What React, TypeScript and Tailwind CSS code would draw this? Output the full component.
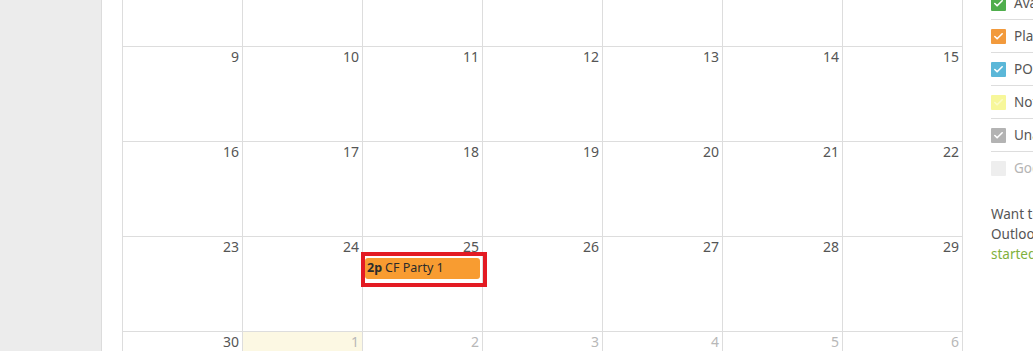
import { Check } from "lucide-react";

type Day = { n: number; muted?: boolean; today?: boolean };

const weeks: Day[][] = [
  [2, 3, 4, 5, 6, 7, 8].map((n) => ({ n })),
  [9, 10, 11, 12, 13, 14, 15].map((n) => ({ n })),
  [16, 17, 18, 19, 20, 21, 22].map((n) => ({ n })),
  [23, 24, 25, 26, 27, 28, 29].map((n) => ({ n })),
  [
    { n: 30 },
    { n: 1, muted: true, today: true },
    { n: 2, muted: true },
    { n: 3, muted: true },
    { n: 4, muted: true },
    { n: 5, muted: true },
    { n: 6, muted: true },
  ],
];

const legend = [
  { label: "Available", box: "bg-[#4fae4c]", text: "text-[#555]", tick: true },
  { label: "Placed", box: "bg-[#f29a3c]", text: "text-[#555]", tick: true },
  { label: "POS", box: "bg-[#5bb7d8]", text: "text-[#555]", tick: true },
  { label: "Not Confirmed", box: "bg-[#f7f79a]", text: "text-[#555]", tick: true, faint: true },
  { label: "Unavailable", box: "bg-[#b3b3b3]", text: "text-[#555]", tick: true },
  { label: "Google Calendar", box: "bg-[#eeeeee]", text: "text-[#b5b5b5]", tick: false },
];

function DayCell({ day, week }: { day: Day; week: number }) {
  const hasEvent = week === 3 && day.n === 25;
  return (
    <div
      className={`relative h-[95px] w-[120px] border-r border-b border-[#dddddd] ${
        day.today ? "bg-[#fcf8e3]" : ""
      }`}
    >
      <div
        className={`pr-[3px] text-right text-[14px] leading-[20px] ${
          day.muted ? "text-[#b8b8b8]" : "text-[#555555]"
        }`}
      >
        {day.n}
      </div>
      {hasEvent && (
        <div className="relative mx-[2px] mt-[1px]">
          <div className="flex h-[21px] items-center rounded-[3px] bg-[#f89c31] px-[2px] text-[12.5px] text-[#2b2b2b]">
            <span className="font-bold">2p</span>
            <span className="ml-[3px]">CF Party 1</span>
          </div>
          {/* annotation box */}
          <div className="absolute -left-[4px] -right-[7px] -top-[6px] -bottom-[8px] border-[4px] border-[#e31b23]" />
        </div>
      )}
    </div>
  );
}

export default function App() {
  return (
    <div className="flex h-[351px] w-[1033px] overflow-hidden bg-white font-['Noto_Sans',sans-serif]">
      {/* Left gutter */}
      <div className="w-[102px] shrink-0 border-r border-[#dcdcdc] bg-[#ececec]" />

      {/* Calendar */}
      <div className="shrink-0 pl-[20px]">
        <div className="-mt-[48px] border-l border-[#dddddd]">
          {weeks.map((week, wi) => (
            <div key={wi} className="flex">
              {week.map((day, di) => (
                <DayCell key={di} day={day} week={wi} />
              ))}
            </div>
          ))}
        </div>
      </div>

      {/* Legend */}
      <aside className="min-w-0 flex-1 overflow-hidden pl-[28px]">
        <div className="w-[260px]">
          <ul className="-mt-[13px]">
            {legend.map((item, i) => (
              <li
                key={item.label}
                className={`flex h-[33px] items-center gap-[8px] ${
                  i < legend.length - 1 ? "border-b border-[#dddddd]" : ""
                }`}
              >
                <span
                  className={`flex h-[15px] w-[15px] shrink-0 items-center justify-center rounded-[1px] ${item.box}`}
                >
                  {item.tick && (
                    <Check
                      className={`h-[11px] w-[11px] ${item.faint ? "text-[#fbfbc8]" : "text-white"}`}
                      strokeWidth={3.5}
                    />
                  )}
                </span>
                <span className={`whitespace-nowrap text-[13.5px] ${item.text}`}>{item.label}</span>
              </li>
            ))}
          </ul>
          <p className="mt-[19px] whitespace-nowrap text-[13.5px] leading-[20px] text-[#555555]">
            Want to sync with your
            <br />
            Outlook calendar?{" "}
            <span className="text-[#7fb13d]">Get</span>
            <br />
            <span className="text-[#7fb13d]">started</span>
          </p>
        </div>
      </aside>
    </div>
  );
}
